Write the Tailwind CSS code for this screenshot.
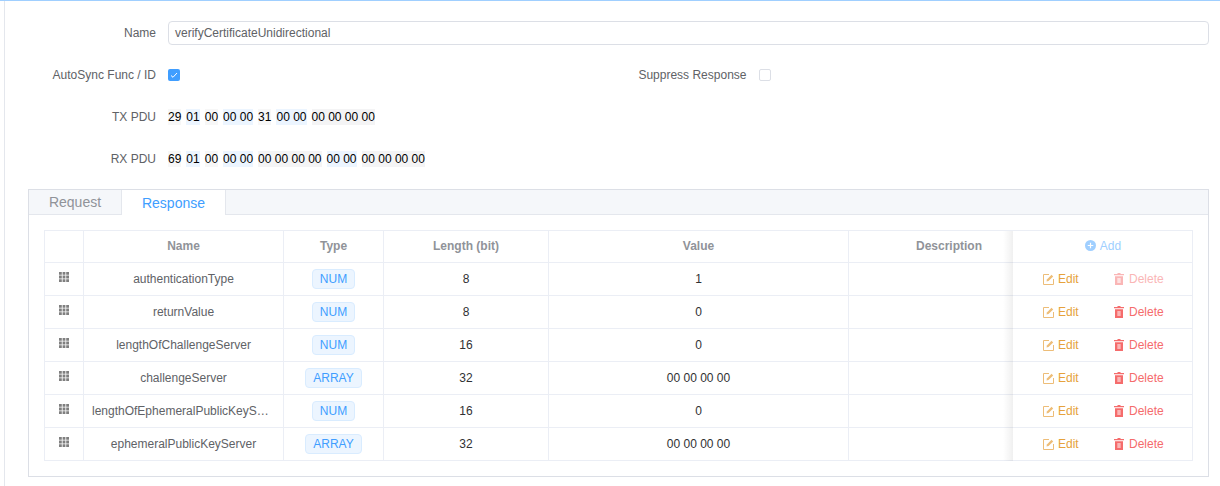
<!DOCTYPE html>
<html lang="en">
<head>
    <meta charset="UTF-8">
    <title>Service Editor</title>
    <script src="https://cdn.jsdelivr.net/npm/@tailwindcss/browser@4"></script>
</head>
<body class="bg-white font-['Liberation_Sans',Arial,sans-serif] text-xs text-[#606266]">
    <div class="h-[486px] overflow-hidden border-t border-[#a0cfff]">
        <div class="ml-1 h-full border-l border-[#e4e7ed] pt-5 pl-[23px] pr-[11px]">
            <!-- Form -->
            <div class="flex items-center h-6 mb-[18px]">
                <label class="w-[128px] text-right">Name</label>
                <div class="ml-3 flex-1 h-6 flex items-center border border-[#dcdfe6] rounded px-[6px]">verifyCertificateUnidirectional</div>
            </div>
            <div class="flex h-6 mb-[18px]">
                <div class="w-1/2 flex items-center">
                    <label class="w-[128px] text-right">AutoSync Func / ID</label>
                    <span class="ml-3 w-3 h-3 rounded-[2px] bg-[#409eff] flex items-center justify-center">
                        <svg class="w-2 h-2" viewBox="0 0 8 8" fill="none" stroke="#fff" stroke-width="1"><path d="M1 4.5 L3 6.3 L7 2"></path></svg>
                    </span>
                </div>
                <div class="w-1/2 flex items-center">
                    <label class="w-[128px] text-right">Suppress Response</label>
                    <span class="ml-3 w-3 h-3 rounded-[2px] border border-[#dcdfe6] bg-white"></span>
                </div>
            </div>
            <div class="flex items-center h-6 mb-[18px]">
                <label class="w-[128px] text-right">TX PDU</label>
                <div class="ml-3 text-black whitespace-nowrap">
                    <span class="bg-[#f7f7f7] mr-[5px] inline-block">29</span><span class="bg-[#ecf5ff] mr-[5px] inline-block">01</span><span class="bg-[#f7f7f7] mr-[5px] inline-block">00</span><span class="bg-[#ecf5ff] mr-[5px] inline-block">00 00</span><span class="bg-[#f7f7f7] mr-[5px] inline-block">31</span><span class="bg-[#ecf5ff] mr-[5px] inline-block">00 00</span><span class="bg-[#f4f4f5] inline-block">00 00 00 00</span>
                </div>
            </div>
            <div class="flex items-center h-6 mb-[18px]">
                <label class="w-[128px] text-right">RX PDU</label>
                <div class="ml-3 text-black whitespace-nowrap">
                    <span class="bg-[#f7f7f7] mr-[5px] inline-block">69</span><span class="bg-[#ecf5ff] mr-[5px] inline-block">01</span><span class="bg-[#f7f7f7] mr-[5px] inline-block">00</span><span class="bg-[#ecf5ff] mr-[5px] inline-block">00 00</span><span class="bg-[#f4f4f5] mr-[5px] inline-block">00 00 00 00</span><span class="bg-[#ecf5ff] mr-[5px] inline-block">00 00</span><span class="bg-[#f4f4f5] inline-block">00 00 00 00</span>
                </div>
            </div>

            <!-- Tabs card -->
            <div class="border border-[#dcdfe6]">
                <div class="flex h-[25px] bg-[#f5f7fa] border-b border-[#e4e7ed] text-sm">
                    <div class="w-[93px] h-[24px] flex items-center justify-center text-[#909399] border-r border-[#e4e7ed]">Request</div>
                    <div class="w-[104px] h-[25px] flex items-center justify-center text-[#409eff] bg-white border-r border-[#e4e7ed]">Response</div>
                </div>
                <div class="p-[15px]">
                    <!-- Table -->
                    <div class="flex border border-[#ebeef5] border-b-0">
                        <div class="flex-1 min-w-0">
                            <div class="grid grid-cols-[39px_200px_100px_165px_300px_200px] h-8 border-b border-[#ebeef5] text-center font-bold text-[#909399]">
                                <div class="border-r border-[#ebeef5]"></div>
                                <div class="border-r border-[#ebeef5] flex items-center justify-center pb-[2px]">Name</div>
                                <div class="border-r border-[#ebeef5] flex items-center justify-center pb-[2px]">Type</div>
                                <div class="border-r border-[#ebeef5] flex items-center justify-center pb-[2px]">Length (bit)</div>
                                <div class="border-r border-[#ebeef5] flex items-center justify-center pb-[2px]">Value</div>
                                <div class="flex items-center justify-center pb-[2px]">Description</div>
                            </div>
                            <div class="grid grid-cols-[39px_200px_100px_165px_300px_200px] h-[33px] border-b border-[#ebeef5] text-center">
                                <div class="border-r border-[#ebeef5] flex justify-center pt-[9px]"><svg class="w-[10px] h-[10px]" viewBox="0 0 10 10" fill="#7f7f7f"><path d="M0 0h2.8v2.8H0zM3.6 0h2.8v2.8H3.6zM7.2 0H10v2.8H7.2zM0 3.6h2.8v2.8H0zM3.6 3.6h2.8v2.8H3.6zM7.2 3.6H10v2.8H7.2zM0 7.2h2.8V10H0zM3.6 7.2h2.8V10H3.6zM7.2 7.2H10V10H7.2z"></path></svg></div>
                                <div class="border-r border-[#ebeef5] flex items-center justify-center px-2">authenticationType</div>
                                <div class="border-r border-[#ebeef5] flex items-center justify-center"><span class="h-5 flex items-center px-[7px] bg-[#ecf5ff] border border-[#d9ecff] rounded text-[#409eff]">NUM</span></div>
                                <div class="border-r border-[#ebeef5] flex items-center justify-center text-[#303133]">8</div>
                                <div class="border-r border-[#ebeef5] flex items-center justify-center text-[#303133]">1</div>
                                <div></div>
                            </div>
                            <div class="grid grid-cols-[39px_200px_100px_165px_300px_200px] h-[33px] border-b border-[#ebeef5] text-center">
                                <div class="border-r border-[#ebeef5] flex justify-center pt-[9px]"><svg class="w-[10px] h-[10px]" viewBox="0 0 10 10" fill="#7f7f7f"><path d="M0 0h2.8v2.8H0zM3.6 0h2.8v2.8H3.6zM7.2 0H10v2.8H7.2zM0 3.6h2.8v2.8H0zM3.6 3.6h2.8v2.8H3.6zM7.2 3.6H10v2.8H7.2zM0 7.2h2.8V10H0zM3.6 7.2h2.8V10H3.6zM7.2 7.2H10V10H7.2z"></path></svg></div>
                                <div class="border-r border-[#ebeef5] flex items-center justify-center px-2">returnValue</div>
                                <div class="border-r border-[#ebeef5] flex items-center justify-center"><span class="h-5 flex items-center px-[7px] bg-[#ecf5ff] border border-[#d9ecff] rounded text-[#409eff]">NUM</span></div>
                                <div class="border-r border-[#ebeef5] flex items-center justify-center text-[#303133]">8</div>
                                <div class="border-r border-[#ebeef5] flex items-center justify-center text-[#303133]">0</div>
                                <div></div>
                            </div>
                            <div class="grid grid-cols-[39px_200px_100px_165px_300px_200px] h-[33px] border-b border-[#ebeef5] text-center">
                                <div class="border-r border-[#ebeef5] flex justify-center pt-[9px]"><svg class="w-[10px] h-[10px]" viewBox="0 0 10 10" fill="#7f7f7f"><path d="M0 0h2.8v2.8H0zM3.6 0h2.8v2.8H3.6zM7.2 0H10v2.8H7.2zM0 3.6h2.8v2.8H0zM3.6 3.6h2.8v2.8H3.6zM7.2 3.6H10v2.8H7.2zM0 7.2h2.8V10H0zM3.6 7.2h2.8V10H3.6zM7.2 7.2H10V10H7.2z"></path></svg></div>
                                <div class="border-r border-[#ebeef5] flex items-center justify-center px-2">lengthOfChallengeServer</div>
                                <div class="border-r border-[#ebeef5] flex items-center justify-center"><span class="h-5 flex items-center px-[7px] bg-[#ecf5ff] border border-[#d9ecff] rounded text-[#409eff]">NUM</span></div>
                                <div class="border-r border-[#ebeef5] flex items-center justify-center text-[#303133]">16</div>
                                <div class="border-r border-[#ebeef5] flex items-center justify-center text-[#303133]">0</div>
                                <div></div>
                            </div>
                            <div class="grid grid-cols-[39px_200px_100px_165px_300px_200px] h-[33px] border-b border-[#ebeef5] text-center">
                                <div class="border-r border-[#ebeef5] flex justify-center pt-[9px]"><svg class="w-[10px] h-[10px]" viewBox="0 0 10 10" fill="#7f7f7f"><path d="M0 0h2.8v2.8H0zM3.6 0h2.8v2.8H3.6zM7.2 0H10v2.8H7.2zM0 3.6h2.8v2.8H0zM3.6 3.6h2.8v2.8H3.6zM7.2 3.6H10v2.8H7.2zM0 7.2h2.8V10H0zM3.6 7.2h2.8V10H3.6zM7.2 7.2H10V10H7.2z"></path></svg></div>
                                <div class="border-r border-[#ebeef5] flex items-center justify-center px-2">challengeServer</div>
                                <div class="border-r border-[#ebeef5] flex items-center justify-center"><span class="h-5 flex items-center px-[7px] bg-[#ecf5ff] border border-[#d9ecff] rounded text-[#409eff]">ARRAY</span></div>
                                <div class="border-r border-[#ebeef5] flex items-center justify-center text-[#303133]">32</div>
                                <div class="border-r border-[#ebeef5] flex items-center justify-center text-[#303133]">00 00 00 00</div>
                                <div></div>
                            </div>
                            <div class="grid grid-cols-[39px_200px_100px_165px_300px_200px] h-[33px] border-b border-[#ebeef5] text-center">
                                <div class="border-r border-[#ebeef5] flex justify-center pt-[9px]"><svg class="w-[10px] h-[10px]" viewBox="0 0 10 10" fill="#7f7f7f"><path d="M0 0h2.8v2.8H0zM3.6 0h2.8v2.8H3.6zM7.2 0H10v2.8H7.2zM0 3.6h2.8v2.8H0zM3.6 3.6h2.8v2.8H3.6zM7.2 3.6H10v2.8H7.2zM0 7.2h2.8V10H0zM3.6 7.2h2.8V10H3.6zM7.2 7.2H10V10H7.2z"></path></svg></div>
                                <div class="border-r border-[#ebeef5] px-2 truncate text-left leading-[32px]">lengthOfEphemeralPublicKeyServer</div>
                                <div class="border-r border-[#ebeef5] flex items-center justify-center"><span class="h-5 flex items-center px-[7px] bg-[#ecf5ff] border border-[#d9ecff] rounded text-[#409eff]">NUM</span></div>
                                <div class="border-r border-[#ebeef5] flex items-center justify-center text-[#303133]">16</div>
                                <div class="border-r border-[#ebeef5] flex items-center justify-center text-[#303133]">0</div>
                                <div></div>
                            </div>
                            <div class="grid grid-cols-[39px_200px_100px_165px_300px_200px] h-[33px] border-b border-[#ebeef5] text-center">
                                <div class="border-r border-[#ebeef5] flex justify-center pt-[9px]"><svg class="w-[10px] h-[10px]" viewBox="0 0 10 10" fill="#7f7f7f"><path d="M0 0h2.8v2.8H0zM3.6 0h2.8v2.8H3.6zM7.2 0H10v2.8H7.2zM0 3.6h2.8v2.8H0zM3.6 3.6h2.8v2.8H3.6zM7.2 3.6H10v2.8H7.2zM0 7.2h2.8V10H0zM3.6 7.2h2.8V10H3.6zM7.2 7.2H10V10H7.2z"></path></svg></div>
                                <div class="border-r border-[#ebeef5] flex items-center justify-center px-2">ephemeralPublicKeyServer</div>
                                <div class="border-r border-[#ebeef5] flex items-center justify-center"><span class="h-5 flex items-center px-[7px] bg-[#ecf5ff] border border-[#d9ecff] rounded text-[#409eff]">ARRAY</span></div>
                                <div class="border-r border-[#ebeef5] flex items-center justify-center text-[#303133]">32</div>
                                <div class="border-r border-[#ebeef5] flex items-center justify-center text-[#303133]">00 00 00 00</div>
                                <div></div>
                            </div>
                        </div>

                        <!-- Fixed action column -->
                        <div class="w-[179px] shrink-0 relative bg-white">
                            <div class="absolute right-full top-0 bottom-0 w-[10px] bg-gradient-to-l from-black/[0.06] to-transparent"></div>
                            <div class="h-8 border-b border-[#ebeef5] flex items-center justify-center gap-1 pb-[2px] pl-px text-[#a0cfff]">
                                <svg class="w-[11px] h-[11px]" viewBox="0 0 12 12"><circle cx="6" cy="6" r="6" fill="#a0cfff"></circle><path d="M3 6h6M6 3v6" stroke="#fff" stroke-width="1.3"></path></svg>
                                Add
                            </div>
                            <div class="h-[33px] border-b border-[#ebeef5] flex items-center pl-[30px]">
                                <span class="w-[71px] flex items-center gap-1 text-[#e6a23c]"><svg class="w-[11px] h-[11px]" viewBox="0 0 11 11" fill="none" stroke="#edbd78"><path d="M6 .5H.5v10h10V5"></path><path d="M3.5 7.5l.4-2L8.5.8l1.7 1.7L5.5 7.1z" fill="#edbd78" stroke="none"></path></svg>Edit</span>
                                <span class="flex items-center gap-[5px] text-[#fab6b6]"><svg class="w-[10px] h-3" viewBox="0 0 10 12"><path d="M3.5 0h3v1H10v1.3H0V1h3.5zM1 3.2h8V12H1z" fill="#fab6b6"></path><path d="M3.3 5h3.4v5H3.3z" fill="#fde2e2"></path></svg>Delete</span>
                            </div>
                            <div class="h-[33px] border-b border-[#ebeef5] flex items-center pl-[30px]">
                                <span class="w-[71px] flex items-center gap-1 text-[#e6a23c]"><svg class="w-[11px] h-[11px]" viewBox="0 0 11 11" fill="none" stroke="#edbd78"><path d="M6 .5H.5v10h10V5"></path><path d="M3.5 7.5l.4-2L8.5.8l1.7 1.7L5.5 7.1z" fill="#edbd78" stroke="none"></path></svg>Edit</span>
                                <span class="flex items-center gap-[5px] text-[#f56c6c]"><svg class="w-[10px] h-3" viewBox="0 0 10 12"><path d="M3.5 0h3v1H10v1.3H0V1h3.5zM1 3.2h8V12H1z" fill="#f56c6c"></path><path d="M3.3 5h3.4v5H3.3z" fill="#fab6b6"></path></svg>Delete</span>
                            </div>
                            <div class="h-[33px] border-b border-[#ebeef5] flex items-center pl-[30px]">
                                <span class="w-[71px] flex items-center gap-1 text-[#e6a23c]"><svg class="w-[11px] h-[11px]" viewBox="0 0 11 11" fill="none" stroke="#edbd78"><path d="M6 .5H.5v10h10V5"></path><path d="M3.5 7.5l.4-2L8.5.8l1.7 1.7L5.5 7.1z" fill="#edbd78" stroke="none"></path></svg>Edit</span>
                                <span class="flex items-center gap-[5px] text-[#f56c6c]"><svg class="w-[10px] h-3" viewBox="0 0 10 12"><path d="M3.5 0h3v1H10v1.3H0V1h3.5zM1 3.2h8V12H1z" fill="#f56c6c"></path><path d="M3.3 5h3.4v5H3.3z" fill="#fab6b6"></path></svg>Delete</span>
                            </div>
                            <div class="h-[33px] border-b border-[#ebeef5] flex items-center pl-[30px]">
                                <span class="w-[71px] flex items-center gap-1 text-[#e6a23c]"><svg class="w-[11px] h-[11px]" viewBox="0 0 11 11" fill="none" stroke="#edbd78"><path d="M6 .5H.5v10h10V5"></path><path d="M3.5 7.5l.4-2L8.5.8l1.7 1.7L5.5 7.1z" fill="#edbd78" stroke="none"></path></svg>Edit</span>
                                <span class="flex items-center gap-[5px] text-[#f56c6c]"><svg class="w-[10px] h-3" viewBox="0 0 10 12"><path d="M3.5 0h3v1H10v1.3H0V1h3.5zM1 3.2h8V12H1z" fill="#f56c6c"></path><path d="M3.3 5h3.4v5H3.3z" fill="#fab6b6"></path></svg>Delete</span>
                            </div>
                            <div class="h-[33px] border-b border-[#ebeef5] flex items-center pl-[30px]">
                                <span class="w-[71px] flex items-center gap-1 text-[#e6a23c]"><svg class="w-[11px] h-[11px]" viewBox="0 0 11 11" fill="none" stroke="#edbd78"><path d="M6 .5H.5v10h10V5"></path><path d="M3.5 7.5l.4-2L8.5.8l1.7 1.7L5.5 7.1z" fill="#edbd78" stroke="none"></path></svg>Edit</span>
                                <span class="flex items-center gap-[5px] text-[#f56c6c]"><svg class="w-[10px] h-3" viewBox="0 0 10 12"><path d="M3.5 0h3v1H10v1.3H0V1h3.5zM1 3.2h8V12H1z" fill="#f56c6c"></path><path d="M3.3 5h3.4v5H3.3z" fill="#fab6b6"></path></svg>Delete</span>
                            </div>
                            <div class="h-[33px] border-b border-[#ebeef5] flex items-center pl-[30px]">
                                <span class="w-[71px] flex items-center gap-1 text-[#e6a23c]"><svg class="w-[11px] h-[11px]" viewBox="0 0 11 11" fill="none" stroke="#edbd78"><path d="M6 .5H.5v10h10V5"></path><path d="M3.5 7.5l.4-2L8.5.8l1.7 1.7L5.5 7.1z" fill="#edbd78" stroke="none"></path></svg>Edit</span>
                                <span class="flex items-center gap-[5px] text-[#f56c6c]"><svg class="w-[10px] h-3" viewBox="0 0 10 12"><path d="M3.5 0h3v1H10v1.3H0V1h3.5zM1 3.2h8V12H1z" fill="#f56c6c"></path><path d="M3.3 5h3.4v5H3.3z" fill="#fab6b6"></path></svg>Delete</span>
                            </div>
                        </div>
                    </div>
                </div>
            </div>
        </div>
    </div>
</body>
</html>
